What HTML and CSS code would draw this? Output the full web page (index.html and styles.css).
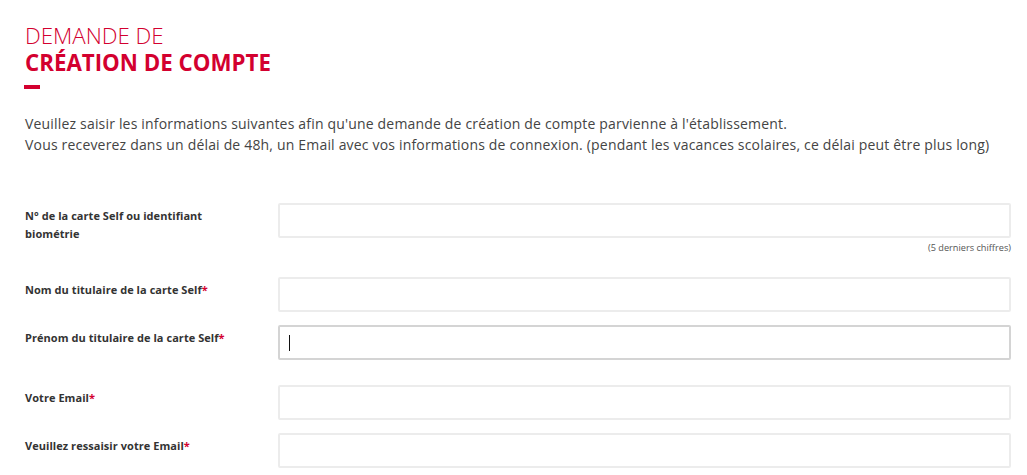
FILE: index.html
```html
<!DOCTYPE html>
<html lang="fr">
<head>
<meta charset="utf-8">
<title>Demande de création de compte</title>
<link rel="stylesheet" href="styles.css">
</head>
<body>
<main class="page">
  <h1 class="title">
    <span class="title-light">DEMANDE DE</span>
    <span class="title-bold">CRÉATION DE COMPTE</span>
  </h1>
  <div class="title-bar"></div>
  <p class="intro">Veuillez saisir les informations suivantes afin qu'une demande de création de compte parvienne à l'établissement.<br>Vous receverez dans un délai de 48h, un Email avec vos informations de connexion. (pendant les vacances scolaires, ce délai peut être plus long)</p>

  <form class="form">
    <div class="row row-first">
      <label class="label">N° de la carte Self ou identifiant biométrie</label>
      <div class="field">
        <input class="input" type="text">
        <div class="hint">(5 derniers chiffres)</div>
      </div>
    </div>
    <div class="row row-gap-l">
      <label class="label">Nom du titulaire de la carte Self<span class="req">*</span></label>
      <div class="field"><input class="input" type="text"></div>
    </div>
    <div class="row row-gap-s">
      <label class="label">Prénom du titulaire de la carte Self<span class="req">*</span></label>
      <div class="field">
        <div class="input input-focus"><span class="caret"></span></div>
      </div>
    </div>
    <div class="row row-gap-m">
      <label class="label">Votre Email<span class="req">*</span></label>
      <div class="field"><input class="input" type="text"></div>
    </div>
    <div class="row row-gap-s">
      <label class="label">Veuillez ressaisir votre Email<span class="req">*</span></label>
      <div class="field"><input class="input" type="text"></div>
    </div>
  </form>
</main>
</body>
</html>
```

FILE: styles.css
```css
* { box-sizing: border-box; }
html, body { margin: 0; padding: 0; background: #fff; }
body { font-family: "Open Sans", "Noto Sans", sans-serif; color: #444; overflow: hidden; }

.page { padding: 22px 16px 0 25px; }

.title { margin: 0; font-size: 22.3px; line-height: 27px; color: #d3002f; }
.title-light { display: block; font-weight: 300; }
.title-bold { display: block; font-weight: 700; }

.title-bar { width: 16px; height: 4px; background: #d3002f; margin-top: 9px; margin-left: -1px; }

.intro { margin: 24px 0 0; font-size: 14px; line-height: 21px; letter-spacing: 0.18px; color: #444; }

.form { margin-top: 48px; }
.row { display: flex; align-items: flex-start; }
.row-gap-l { margin-top: 23px; }
.row-gap-s { margin-top: 13px; }
.row-gap-m { margin-top: 25px; }

.label { width: 253px; flex: none; padding: 4px 30px 0 0; font-size: 11px; line-height: 18px; font-weight: 700; letter-spacing: 0.05px; color: #333; }
.req { color: #d3002f; }

.field { flex: 1; position: relative; }
.input { display: block; width: 100%; height: 35px; border: 2px solid #ececec; border-radius: 2px; background: #fff; margin: 0; padding: 0 8px; font-family: inherit; font-size: 13px; outline: none; }
.input-focus { position: relative; border-color: #d4d4d4; }
.caret { position: absolute; left: 9px; top: 8px; width: 1px; height: 16px; background: #111; }

.hint { text-align: right; font-size: 9.2px; line-height: 12px; color: #555; margin-top: 4px; }
```
